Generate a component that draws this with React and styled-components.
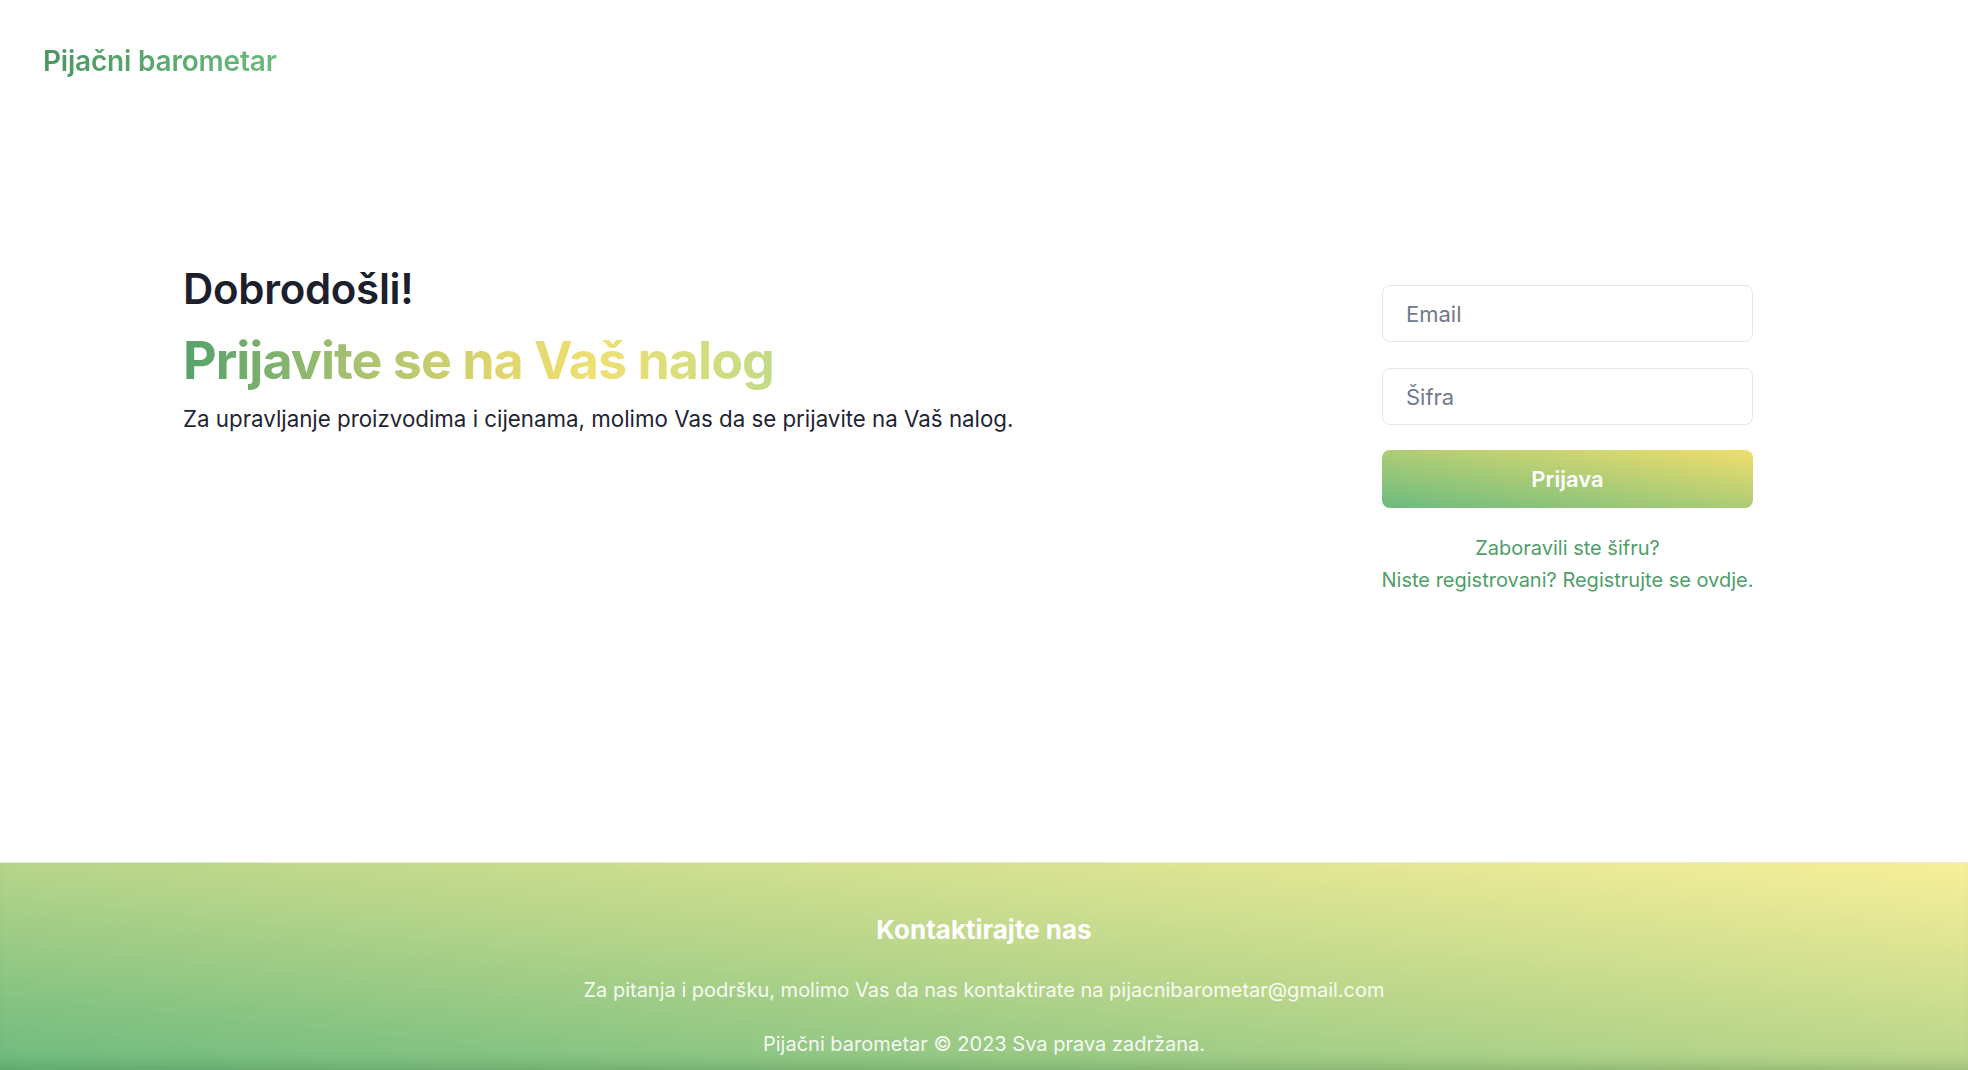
import React from "react";
import styled, { createGlobalStyle } from "styled-components";

const Global = createGlobalStyle`
  * { box-sizing: border-box; }
  html, body { margin: 0; padding: 0; background: #ffffff; }
  body { font-family: Inter, "Noto Sans", "Liberation Sans", sans-serif; color: #1f2937; }
`;

const Page = styled.div`
  display: flex;
  flex-direction: column;
  min-height: 1070px;
`;

const Header = styled.header`
  height: 122px;
  display: flex;
  align-items: center;
  padding: 0 43px;
`;

const Logo = styled.a`
  font-size: 28px;
  font-weight: 600;
  letter-spacing: -0.2px;
  background: linear-gradient(to right, #4a9762, #6cb97e);
  -webkit-background-clip: text;
  background-clip: text;
  color: transparent;
  text-decoration: none;
`;

const Main = styled.main`
  height: 740px;
  display: flex;
  justify-content: space-between;
  align-items: flex-start;
  padding: 143px 215px 0 183px;
`;

const Intro = styled.section`
  display: flex;
  flex-direction: column;
`;

const Welcome = styled.h1`
  margin: 0;
  font-size: 42px;
  line-height: 48px;
  font-weight: 600;
  color: #1b202c;
  letter-spacing: -0.3px;
`;

const Title = styled.h2`
  margin: 15px 0 0;
  font-size: 52px;
  line-height: 66px;
  font-weight: 700;
  letter-spacing: -1px;
  align-self: flex-start;
  background: linear-gradient(to right, #55a16a 0%, #a9c26f 30%, #ddd56d 52%, #efe072 70%, #c3db86 100%);
  -webkit-background-clip: text;
  background-clip: text;
  color: transparent;
`;

const Lead = styled.p`
  margin: 9px 0 0;
  font-size: 22.3px;
  line-height: 32px;
  color: #1f2533;
`;

const Form = styled.form`
  width: 371px;
  margin-top: 20px;
  display: flex;
  flex-direction: column;
`;

const Input = styled.input`
  height: 57px;
  width: 100%;
  border: 1px solid #e3e6ea;
  border-radius: 8px;
  padding: 0 23px;
  font-family: inherit;
  font-size: 22px;
  color: #1f2937;
  background: #fff;
  outline: none;
  & + & { margin-top: 26px; }
  &::placeholder { color: #727a8a; }
`;

const Submit = styled.button`
  margin-top: 25px;
  height: 58px;
  width: 100%;
  border: none;
  border-radius: 8px;
  background: linear-gradient(to top right, #6bbb7f, #f0de6c);
  color: #ffffff;
  font-family: inherit;
  font-size: 22px;
  font-weight: 600;
  cursor: pointer;
`;

const Links = styled.div`
  margin-top: 24px;
  display: flex;
  flex-direction: column;
  align-items: center;
`;

const TextLink = styled.a`
  font-size: 20px;
  line-height: 32px;
  color: #4f9d69;
  text-decoration: none;
  white-space: nowrap;
`;

const Footer = styled.footer`
  height: 208px;
  border-top: 1px solid #e6ead8;
  background: linear-gradient(to top right, #6cba7e, #b7d58a 50%, #f8ef99);
  box-shadow: inset 0 -14px 14px -10px rgba(40, 80, 30, 0.22);
  display: flex;
  flex-direction: column;
  align-items: center;
  padding-top: 49px;
  color: rgba(255, 255, 255, 0.95);
`;

const FooterTitle = styled.h3`
  margin: 0;
  font-size: 26px;
  line-height: 36px;
  font-weight: 700;
  color: #ffffff;
`;

const FooterText = styled.p`
  margin: ${(p) => p.$gap}px 0 0;
  font-size: 20px;
  line-height: 30px;
  color: rgba(255, 255, 255, 0.92);
`;

export default function App() {
  return (
    <>
      <Global />
      <Page>
        <Header>
          <Logo href="#">Pijačni barometar</Logo>
        </Header>
        <Main>
          <Intro>
            <Welcome>Dobrodošli!</Welcome>
            <Title>Prijavite se na Vaš nalog</Title>
            <Lead>Za upravljanje proizvodima i cijenama, molimo Vas da se prijavite na Vaš nalog.</Lead>
          </Intro>
          <Form onSubmit={(e) => e.preventDefault()}>
            <Input type="email" placeholder="Email" />
            <Input type="password" placeholder="Šifra" />
            <Submit type="submit">Prijava</Submit>
            <Links>
              <TextLink href="#">Zaboravili ste šifru?</TextLink>
              <TextLink href="#">Niste registrovani? Registrujte se ovdje.</TextLink>
            </Links>
          </Form>
        </Main>
        <Footer>
          <FooterTitle>Kontaktirajte nas</FooterTitle>
          <FooterText $gap={27}>Za pitanja i podršku, molimo Vas da nas kontaktirate na pijacnibarometar@gmail.com</FooterText>
          <FooterText $gap={24}>Pijačni barometar © 2023 Sva prava zadržana.</FooterText>
        </Footer>
      </Page>
    </>
  );
}
